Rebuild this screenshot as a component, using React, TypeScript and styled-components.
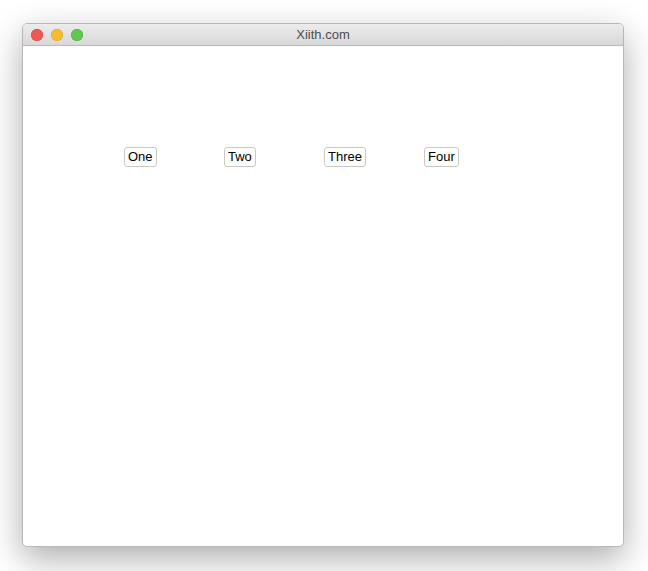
import styled, { createGlobalStyle } from "styled-components";

const GlobalStyle = createGlobalStyle`
  html, body {
    margin: 0;
    padding: 0;
    background: #ffffff;
  }
`;

const Page = styled.div`
  width: 648px;
  height: 571px;
  padding: 23px 0 0 22px;
  box-sizing: border-box;
`;

const Window = styled.div`
  width: 602px;
  height: 524px;
  border: 1px solid #b8b8b8;
  border-radius: 5px;
  box-sizing: border-box;
  background: #ffffff;
  overflow: hidden;
  box-shadow: 0 12px 34px rgba(0, 0, 0, 0.32);
  display: flex;
  flex-direction: column;
`;

const TitleBar = styled.div`
  height: 21px;
  flex-shrink: 0;
  background: linear-gradient(#ececec, #d8d8d8);
  border-bottom: 1px solid #b9b9b9;
  display: flex;
  align-items: center;
  position: relative;
  padding-left: 8px;
  gap: 8px;
`;

const Light = styled.span<{ $color: string; $edge: string }>`
  width: 12px;
  height: 12px;
  border-radius: 50%;
  background: ${(p) => p.$color};
  box-shadow: inset 0 0 0 0.5px ${(p) => p.$edge};
`;

const Title = styled.div`
  position: absolute;
  left: 0;
  right: 0;
  top: 0;
  line-height: 22px;
  text-align: center;
  font-family: "Liberation Sans", Arial, sans-serif;
  font-size: 13px;
  color: #4d4d4d;
  pointer-events: none;
`;

const Content = styled.div`
  flex: 1;
  padding: 101px 0 0 101px;
  display: flex;
  align-items: flex-start;
`;

const Slot = styled.div`
  width: 100px;
  flex-shrink: 0;
`;

const Button = styled.button`
  font-family: "Liberation Sans", Arial, sans-serif;
  font-size: 13px;
  color: #000;
  background: #fff;
  border: 1px solid #c8c8c8;
  border-radius: 3px;
  height: 20px;
  padding: 0 3px;
  line-height: 18px;
  cursor: pointer;
`;

const labels = ["One", "Two", "Three", "Four"];

export default function App() {
  return (
    <>
      <GlobalStyle />
      <Page>
        <Window>
          <TitleBar>
            <Light $color="#ee5a52" $edge="#d6433b" />
            <Light $color="#f5bc32" $edge="#dca02a" />
            <Light $color="#62c554" $edge="#4fab3f" />
            <Title>Xiith.com</Title>
          </TitleBar>
          <Content>
            {labels.map((label) => (
              <Slot key={label}>
                <Button>{label}</Button>
              </Slot>
            ))}
          </Content>
        </Window>
      </Page>
    </>
  );
}
